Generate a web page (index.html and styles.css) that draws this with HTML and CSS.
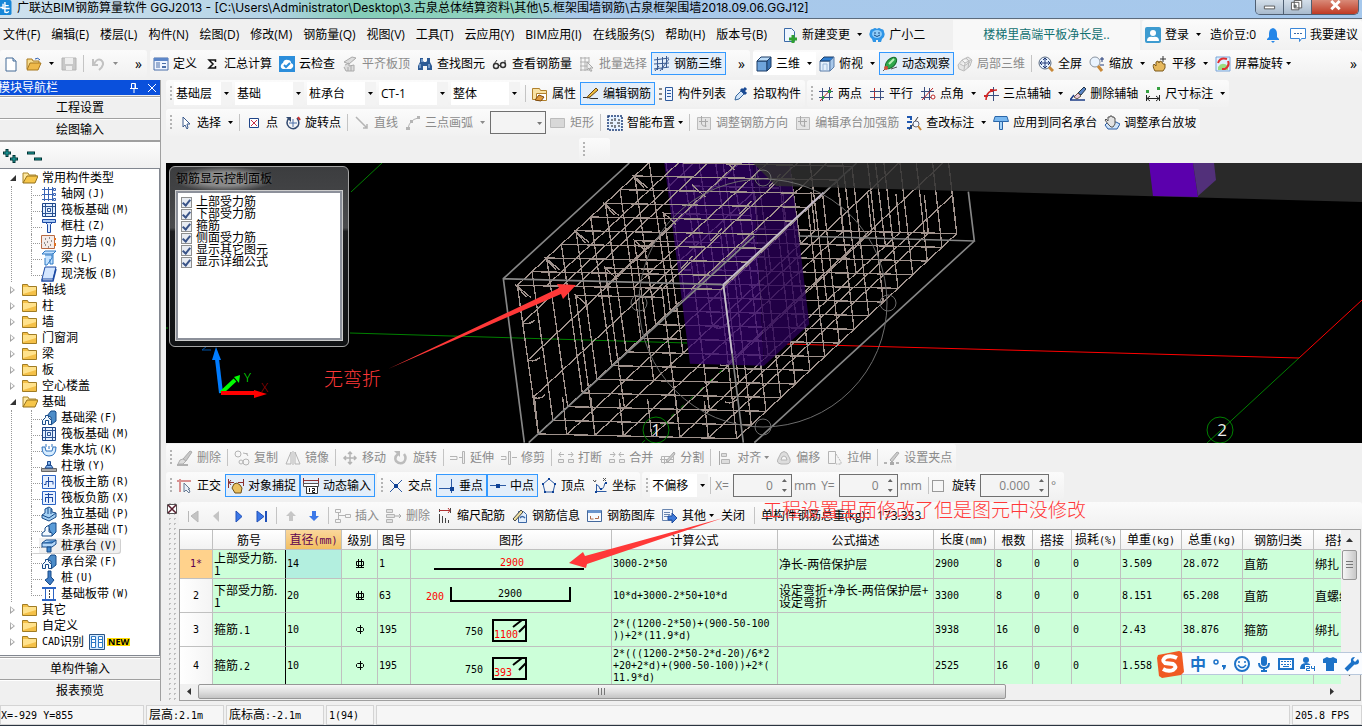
FILE: index.html
```html
<!DOCTYPE html>
<html lang="zh-CN">
<head>
  <meta charset="UTF-8">
  <meta name="viewport" content="width=device-width, initial-scale=1.0">
  <title>广联达BIM钢筋算量软件 GGJ2013</title>
  <link rel="stylesheet" href="styles.css">
</head>
<body>

  <!-- icon sprite -->
  <svg class="sprite" aria-hidden="true">
    <symbol id="i-new" viewBox="0 0 16 16"><path d="M3 2h7l3 3v10H3z" fill="#fff" stroke="#456a96"/><path d="M10 2v3h3" fill="#cfe0f2" stroke="#456a96"/></symbol>
    <symbol id="i-open" viewBox="0 0 16 16"><path d="M1 13V3h5l1 2h6v3" fill="#f6dc8d" stroke="#a8781f"/><path d="M1 14l3-7h11l-3 7z" fill="#eeb94a" stroke="#a8781f"/><path d="M9 3q3-2 5 1" fill="none" stroke="#2a5cae"/></symbol>
    <symbol id="i-save" viewBox="0 0 16 16"><path d="M1 2h14v12H1z" fill="#c8c8c8" stroke="#b4b4b4"/><path d="M4 2h8v6H4zM5 10h6v4H5z" fill="#eee"/></symbol>
    <symbol id="i-undo" viewBox="0 0 16 16"><path d="M3 3v6h5M4 8q3-6 7-4 5 4-2 10" fill="none" stroke="#c2c2c2" stroke-width="2"/></symbol>
    <symbol id="i-def" viewBox="0 0 16 16"><path d="M1 2h14v12H1z" fill="#eef4ff" stroke="#4a6ea8"/><path d="M1 2h14v3H1z" fill="#5c86c8"/><path d="M3 7h4M3 9h4M3 11h4" stroke="#4a6ea8"/><path d="M9 7h4v1H9zM9 10h4v2H9z" fill="#4a6ea8"/></symbol>
    <symbol id="i-sum" viewBox="0 0 16 16"><path d="M11.500 6V4H5l4 4-4 4h6.500v-2" fill="none" stroke="#111" stroke-width="1.500"/></symbol>
    <symbol id="i-cloud" viewBox="0 0 16 16"><path d="M0 0h16v16H0z" fill="#2c8edb"/><path d="M4 13q-3-1-2-4 1-2 2-2 1-4 5-3 3 0 3 3 3 1 2 4l-2 2z" fill="#fff"/><path d="M5 9l2 2 4-4" fill="none" stroke="#2c8edb" stroke-width="2"/></symbol>
    <symbol id="i-slab" viewBox="0 0 16 16"><path d="M2 6l8-5 4 1-7 6zM3 9l4-2v3l5-1v6H4l-2-4M6 11v4M9 10v5" fill="#ddd" stroke="#aaa"/></symbol>
    <symbol id="i-find" viewBox="0 0 16 16"><path d="M3 2h3v3l1 1h2l1-1V2h3v4l2 4v4h-5v-4H6v4H1v-4l2-4z" fill="#2c5a94"/><path d="M3 8v4M12 8v4M5 3v3" stroke="#b8d4f4"/></symbol>
    <symbol id="i-glasses" viewBox="0 0 16 16"><circle cx="4" cy="10" r="2.500" fill="none" stroke="#333" stroke-width="1.500"/><circle cx="11" cy="9" r="2.500" fill="none" stroke="#333" stroke-width="1.500"/><path d="M6 10l3-1M2 8l3-4M13 8V4" stroke="#333"/></symbol>
    <symbol id="i-batch" viewBox="0 0 16 16"><path d="M1 2h9M1 6h9M1 10h9M1 14h9M2 1v14M6 1v14M10 1v6" stroke="#b0b0b0"/><path d="M8 6l6 6-3 0 2 3-2 0-1-3-2 2z" fill="#eee" stroke="#a8a8a8"/></symbol>
    <symbol id="i-mesh" viewBox="0 0 16 16"><path d="M3.500 1v13M8.500 1v13M12.500 0v12M0 4l15-2M0 8l15-1M0 13l15-2M1 15l4-5M6 15l9-12" fill="none" stroke="#3a5a90"/></symbol>
    <symbol id="i-cube" viewBox="0 0 16 16"><path d="M1 5h10v10H1z" fill="#6fa4dc" stroke="#1d3c66"/><path d="M1 5l4-4h10l-4 4z" fill="#bcdcf8" stroke="#1d3c66"/><path d="M11 5l4-4v10l-4 4z" fill="#3c74b4" stroke="#1d3c66"/></symbol>
    <symbol id="i-top" viewBox="0 0 16 16"><path d="M1 5h10v10H1z" fill="#e4f0fc" stroke="#5a7ca8"/><path d="M1 5l4-4h10l-4 4z" fill="#2f7ed0" stroke="#1d3c66"/><path d="M11 5l4-4v10l-4 4z" fill="#a8c8ea" stroke="#5a7ca8"/><path d="M4 15V8h4v7" fill="none" stroke="#9cb8d8"/></symbol>
    <symbol id="i-orbit" viewBox="0 0 16 16"><ellipse cx="9" cy="7" rx="7" ry="4" transform="rotate(-45 9 7)" fill="#2ea84a" stroke="#176a2c"/><path d="M7 8l5-5" stroke="#b8f0b8" stroke-width="2"/><path d="M1 15l5-5M9 13l6-2" stroke="#555"/><circle cx="4" cy="12" r="2" fill="#d05038"/></symbol>
    <symbol id="i-part" viewBox="0 0 16 16"><path d="M1 9l4-5 6-3 4 3-2 6-6 5-5-2zM5 4l3 3 6-3M8 7l-1 7M3 8l4 2 6-4M9 2l3 3-1 7" fill="#e6e6e6" stroke="#bbb"/></symbol>
    <symbol id="i-full" viewBox="0 0 16 16"><circle cx="7" cy="7" r="6" fill="#e8f2ff" stroke="#5a6a80"/><path d="M7 2v10M2 7h10M5 4l2-2 2 2M5 10l2 2 2-2M4 5L2 7l2 2M10 5l2 2-2 2" fill="none" stroke="#223a78"/><path d="M11 11l4 4" stroke="#c88838" stroke-width="3"/></symbol>
    <symbol id="i-zoom" viewBox="0 0 16 16"><circle cx="6" cy="6" r="5" fill="#eaf4ff" stroke="#8a94a0"/><path d="M9 10l4 5" stroke="#c88838" stroke-width="3"/><path d="M13 1v5M11 3h4M11 9h4" stroke="#223a78"/></symbol>
    <symbol id="i-pan" viewBox="0 0 16 16"><path d="M3 15q-3-5-1-7l2 2V6l2-1 1 2 1-2 2 1 1 2 2 0v4l-2 3z" fill="#e6b85c" stroke="#7c5a1c"/><path d="M11 0v6M8 3h6" stroke="#333"/></symbol>
    <symbol id="i-rot3" viewBox="0 0 16 16"><path d="M1 1h14v14H1z" fill="#dff0ff" stroke="#7aa6d8"/><path d="M3 11q4-6 10-1v4H3z" fill="#9adc80"/><path d="M3 7q2-6 9-4M13 5q2 5-3 8l-3 0" fill="none" stroke="#e03030" stroke-width="2"/></symbol>
    <symbol id="i-change" viewBox="0 0 16 16"><path d="M2.500 1.500h7l3 3v10h-10z" fill="#eef6ff" stroke="#3a6aa8"/><path d="M11 8v8M7 12h8" stroke="#2fa030" stroke-width="3"/></symbol>
    <symbol id="i-face" viewBox="0 0 16 16"><path d="M8 2q2-2 4 0 3 0 3 3 2 4-2 7l-1 3H9v-2H7v2H4l-1-3Q-1 9 1 5q0-3 3-3 2-2 4 0z" fill="#2f95e6"/><ellipse cx="8" cy="7" rx="5" ry="4" fill="#8fccf8"/><path d="M6 5v2M10 5v2M5 8q3 3 6 0" fill="none" stroke="#144a86"/></symbol>
    <symbol id="i-user" viewBox="0 0 16 16"><rect width="16" height="16" rx="2" fill="#3d9bd0"/><circle cx="8" cy="6" r="3" fill="#fff"/><path d="M2 14q0-5 6-4 6-1 6 4z" fill="#fff"/></symbol>
    <symbol id="i-bell" viewBox="0 0 16 16"><path d="M8 1q4 1 4 6v3l2 2v1H2v-1l2-2V7q0-5 4-6zM6 14h4l-2 2z" fill="#2486e8"/></symbol>
    <symbol id="i-chat" viewBox="0 0 16 16"><path d="M.5 1.500h15v10h-4l-2 3v-3h-9z" fill="#fff" stroke="#3a86d8"/><path d="M4 6.500h8" stroke="#3a6aa8" stroke-dasharray="2 1"/></symbol>
    <symbol id="i-prop" viewBox="0 0 16 16"><path d="M.5 2.500h7l1 2h6v9H.5z" fill="#f8e2a4" stroke="#b0802c"/><path d="M4.500 7.500h10v7h-10z" fill="#fff" stroke="#b0802c"/><path d="M3 14l4-5 5 2-3 4z" fill="#e09a3c" stroke="#7c4a10"/></symbol>
    <symbol id="i-edit" viewBox="0 0 16 16"><path d="M0 11.500h5l3 1h7" fill="none" stroke="#333"/><path d="M5 10L13 2l2 2-8 7-3 1z" fill="#f0c040" stroke="#6a4414"/></symbol>
    <symbol id="i-list" viewBox="0 0 16 16"><path d="M1 2h3v2H1zM1 7h3v2H1zM1 12h3v2H1z" fill="#888"/><path d="M7.500 1.500h7v13h-7z" fill="#eef4ff" stroke="#2e5a9c"/><path d="M9 4.500h4M9 7.500h4M9 10.500h4" stroke="#2e5a9c"/></symbol>
    <symbol id="i-pick" viewBox="0 0 16 16"><path d="M2 14l1-4 5-5 3 3-5 5z" fill="#d4e6fa" stroke="#35669c"/><path d="M8 3l5 5M10 5l3-3" stroke="#1a4a94" stroke-width="3"/></symbol>
    <symbol id="i-two" viewBox="0 0 16 16"><path d="M4.500 2v13M11.500 1v13M1 5.500h14M1 11.500h14" stroke="#3a4e80"/><path d="M2 15L14 2" stroke="#c02828"/><path d="M4 10h2v3H4zM10 4h3v3h-3z" fill="#2c9a40"/></symbol>
    <symbol id="i-para" viewBox="0 0 16 16"><path d="M5.500 2v12" stroke="#c02828"/><path d="M11.500 2v12M1 5.500h14M1 11.500h14" stroke="#3a4e80"/></symbol>
    <symbol id="i-angle" viewBox="0 0 16 16"><path d="M4.500 1v13M1 5.500h13M9.500 2v12M1 11.500h14" stroke="#3a4e80"/><path d="M2 14L13 2" stroke="#c02828"/><circle cx="13" cy="11" r="2" fill="#fff" stroke="#c02828"/></symbol>
    <symbol id="i-three" viewBox="0 0 16 16"><path d="M10.500 1v14M4 9.500h12" stroke="#3a4e80"/><path d="M3 14Q3 4 14 4" fill="none" stroke="#d02828" stroke-width="1.500"/><path d="M1 9h4v2H1zM7 3h3v3H7z" fill="#d02828"/></symbol>
    <symbol id="i-delax" viewBox="0 0 16 16"><path d="M8 7l6-6 2 2-5 6z" fill="#5a86c8" stroke="#234"/><path d="M4 11l4-4 3 3-4 3z" fill="#e8c8d8" stroke="#654"/><path d="M0 14h15M0 14l4-5" stroke="#1d3c86" stroke-width="1.500"/></symbol>
    <symbol id="i-dim" viewBox="0 0 16 16"><path d="M1.500 9v6M14.500 9v6M2 12.500h12M5 10l-3 2.500L5 15M11 10l3 2.500-3 2.500" fill="none" stroke="#222"/><path d="M1 4h3v3H1zM12 1h3v3h-3z" fill="#35a040"/></symbol>
    <symbol id="i-cursor" viewBox="0 0 16 16"><path d="M6 2v10l2-2 2 4 1-1-1-4h3z" fill="#fff" stroke="#3a5a8c"/></symbol>
    <symbol id="i-point" viewBox="0 0 16 16"><path d="M3.500 3.500h9v9h-9z" fill="#fff" stroke="#1f4488"/><path d="M5 5l6 6M11 5l-6 6" stroke="#c83048"/></symbol>
    <symbol id="i-rotpt" viewBox="0 0 16 16"><path d="M4 3q-4 5 0 9 5 4 9-1 2-4-1-8" fill="none" stroke="#334a70" stroke-width="1.500"/><path d="M1 2h5v5z" fill="#334a70"/><path d="M8 4v8M4 8h8" stroke="#4a6ea8"/><path d="M13 2l2 3" stroke="#c83030" stroke-width="2"/></symbol>
    <symbol id="i-line" viewBox="0 0 16 16"><path d="M2 2l11 11M13 9v4H9" fill="none" stroke="#b4b4b4" stroke-width="1.500"/></symbol>
    <symbol id="i-arc" viewBox="0 0 16 16"><path d="M3 14Q4 5 13 3" fill="none" stroke="#b4b4b4"/><path d="M1 12h4v3H1zM5 5h3v3H5zM12 1h3v3h-3z" fill="#b4b4b4"/></symbol>
    <symbol id="i-rect" viewBox="0 0 16 16"><path d="M.5 3.500h14v9H.5z" fill="#d8d8d8" stroke="#bcbcbc"/></symbol>
    <symbol id="i-smart" viewBox="0 0 16 16"><path d="M1 1h14v14H1z" fill="#e6f2ff" stroke="#1c3c78" stroke-width="1.500" stroke-dasharray="2 1"/><path d="M8 3v3M8 10v3M3 8h3M10 8h3M4 5h2M11 5h2M4 11h2M11 11h2" stroke="#111"/></symbol>
    <symbol id="i-dir" viewBox="0 0 16 16"><path d="M1.500 2.500h13v12h-13z" fill="#e4e4e4" stroke="#bbb"/><path d="M5.500 1v8q1 3 5 2M9.500 4v8M3 6.500h9" fill="none" stroke="#a8a8a8"/></symbol>
    <symbol id="i-check" viewBox="0 0 16 16"><path d="M1 2h4v3M1 7h5M1 13h4v-3" fill="none" stroke="#1f58b0" stroke-width="2"/><path d="M3 15L12 2" stroke="#3a3a3a"/><circle cx="10" cy="9" r="3" fill="#f2f8ff" stroke="#667"/><path d="M12 11l3 4" stroke="#c88838" stroke-width="2"/></symbol>
    <symbol id="i-cap" viewBox="0 0 16 16"><path d="M2 1.500h12l1.500 5H.5z" fill="#79b8f0" stroke="#2a66a8"/><path d="M6.500 6.500h3v8h-3z" fill="#a8d4f8" stroke="#2a66a8"/></symbol>
    <symbol id="i-slope" viewBox="0 0 16 16"><path d="M1 10l3 4h9l3-5-4-2H4z" fill="#cfe4fa" stroke="#2a5ca4"/><path d="M4 9L1 5l1-1 2 2V2h2V1h2v1h2v1h1v6l-2 3H7z" fill="#e2e2e2" stroke="#555"/></symbol>
    <symbol id="i-brush" viewBox="0 0 16 16"><path d="M6 9l7-8 2 1-6 9z" fill="#c8c8c8" stroke="#aaa"/><path d="M3 10l3-1 3 2-3 3H1z" fill="#ddd" stroke="#b0b0b0"/><path d="M0 15h11" stroke="#b0b0b0" stroke-width="2"/></symbol>
    <symbol id="i-copy" viewBox="0 0 16 16"><circle cx="4" cy="4" r="3" fill="none" stroke="#b4b4b4"/><circle cx="7" cy="12" r="2" fill="none" stroke="#b4b4b4"/><circle cx="12" cy="12" r="3" fill="none" stroke="#b4b4b4"/><path d="M9 3l5 1M12 3l2 3" stroke="#b4b4b4"/></symbol>
    <symbol id="i-mirror" viewBox="0 0 16 16"><path d="M6 2v12H1zM10 2v12h5z" fill="none" stroke="#b4b4b4"/><path d="M8 1v14" stroke="#b4b4b4"/></symbol>
    <symbol id="i-move" viewBox="0 0 16 16"><path d="M8 2v12M2 8h12M6 4l2-2 2 2M6 12l2 2 2-2M4 6L2 8l2 2M12 6l2 2-2 2" fill="none" stroke="#b4b4b4" stroke-width="1.500"/></symbol>
    <symbol id="i-rotate" viewBox="0 0 16 16"><path d="M5 4q-4 3-2 7 4 4 8 1 3-4 0-8" fill="none" stroke="#bcbcbc" stroke-width="2.500"/><path d="M1 1h6v6z" fill="#bcbcbc"/></symbol>
    <symbol id="i-extend" viewBox="0 0 16 16"><path d="M0 6.500h7v3H0M9 7.500h3" fill="none" stroke="#b4b4b4"/><path d="M12.500 1.500h2v12h-2z" fill="#eee" stroke="#b4b4b4"/></symbol>
    <symbol id="i-trim" viewBox="0 0 16 16"><path d="M0 6.500h5v3H0M11 7.500h5" fill="none" stroke="#b4b4b4"/><path d="M7.500 1.500h2v13h-2z" fill="#eee" stroke="#b4b4b4"/></symbol>
    <symbol id="i-break" viewBox="0 0 16 16"><path d="M1 4.500h5M10 4.500h5M3 2L1 4.500 3 7M13 2l2 2.500L13 7" fill="none" stroke="#b4b4b4"/><path d="M.5 9.500h5v3h-5zM10.500 9.500h5v3h-5z" fill="#eee" stroke="#b4b4b4"/></symbol>
    <symbol id="i-merge" viewBox="0 0 16 16"><path d="M1 4.500h5M10 4.500h5M4 2l2 2.500L4 7M12 2l-2 2.500L12 7" fill="none" stroke="#b4b4b4"/><path d="M.5 9.500h5v3h-5zM10.500 9.500h5v3h-5z" fill="#eee" stroke="#b4b4b4"/></symbol>
    <symbol id="i-split" viewBox="0 0 16 16"><path d="M1.500 6.500h12v6h-12zM0 9.500h14M4.500 6v8" fill="none" stroke="#b4b4b4"/><path d="M6 11l8-9 1 2-7 8z" fill="#ccc" stroke="#aaa"/></symbol>
    <symbol id="i-align" viewBox="0 0 16 16"><path d="M2.500 1v14" stroke="#a8a8a8"/><path d="M4.500 3.500h5v3h-5zM4.500 9.500h8v4h-8z" fill="#ddd" stroke="#b4b4b4"/></symbol>
    <symbol id="i-offset" viewBox="0 0 16 16"><path d="M5 3q3-3 6 0l3 6q1 5-4 5H5q-5-1-3-5z" fill="#ddd" stroke="#b4b4b4"/><path d="M6 7q2-2 4 0l1 3H5z" fill="#f6f6f6" stroke="#b4b4b4"/></symbol>
    <symbol id="i-stretch" viewBox="0 0 16 16"><path d="M1.500 1.500h7v12h-7z" fill="none" stroke="#b4b4b4"/><path d="M9 4l5 8v2H9" fill="none" stroke="#b4b4b4" stroke-dasharray="2 1"/></symbol>
    <symbol id="i-grip" viewBox="0 0 16 16"><path d="M0 13h3M12 13h3" stroke="#b4b4b4" stroke-width="2"/><path d="M6 10l7-8 2 1-7 9z" fill="#ccc" stroke="#aaa"/><path d="M6 12h4v3H6z" fill="#aaa"/></symbol>
    <symbol id="i-ortho" viewBox="0 0 16 16"><path d="M0 3h14M3 1v13" stroke="#d89090" stroke-width="2"/><path d="M7 5v9l2-2 3 3 1-2-2-2h2z" fill="#e8eef6" stroke="#667a94"/></symbol>
    <symbol id="i-snap" viewBox="0 0 16 16"><path d="M.5 1v9M15.500 1v7M1 4.500h5M10 4.500h5M3 2L1 4.500 3 7" fill="none" stroke="#8c3030"/><path d="M4 10l2-4 3-1 3 2 2 3-1 5H7z" fill="#eac060" stroke="#6e5018"/></symbol>
    <symbol id="i-dyn" viewBox="0 0 16 16"><path d="M.5 0v6M15.500 0v6M1 2.500h14" stroke="#8c3030"/><path d="M.5 5.500h15v3H.5z" fill="#fff" stroke="#555"/><path d="M3.500 8.500h11v7h-11z" fill="#fff" stroke="#333"/><path d="M6.500 10v4M9 10.500h2.500v2h-2v2H12" fill="none" stroke="#111"/></symbol>
    <symbol id="i-cross" viewBox="0 0 16 16"><path d="M2 2l12 12M14 2L2 14" stroke="#2c5aa4"/><path d="M6 6h4v4H6z" fill="#0f4296"/></symbol>
    <symbol id="i-perp" viewBox="0 0 16 16"><path d="M12.500 1v14M0 10.500h15" stroke="#2c5aa4"/><path d="M11 9h4v4h-4z" fill="#0f4296"/></symbol>
    <symbol id="i-mid" viewBox="0 0 16 16"><path d="M0 7.500h16" stroke="#2c5aa4"/><path d="M6 6h4v4H6z" fill="#0f4296"/></symbol>
    <symbol id="i-vertex" viewBox="0 0 16 16"><path d="M8 1l6 5-2 8H4L2 6z" fill="none" stroke="#2c5aa4"/><path d="M7 0h2v2H7zM13 5h2v2h-2zM1 5h2v2H1zM3 13h2v2H3zM11 13h2v2h-2z" fill="#0f4296"/></symbol>
    <symbol id="i-coord" viewBox="0 0 16 16"><path d="M4.500 6v7.500h10M5 7q2 0 3 4 3 2 5-6" fill="none" stroke="#2c5aa4"/><path d="M3 13h2v2H3zM8 10h2v2H8zM13 4h2v2h-2z" fill="#0f4296"/><path d="M1 2l2 2 1-2M11 0l3 3M14 0l-3 3" fill="none" stroke="#555"/></symbol>
    <symbol id="i-first" viewBox="0 0 16 16"><path d="M3.500 3v11M13 3v11L6 8z" fill="#c4c4c4" stroke="#b8b8b8"/></symbol>
    <symbol id="i-prev" viewBox="0 0 16 16"><path d="M11 3v11L5 8z" fill="#c4c4c4"/></symbol>
    <symbol id="i-next" viewBox="0 0 16 16"><path d="M5 3v11l6-5.500z" fill="#3c78e8" stroke="#2050b8"/></symbol>
    <symbol id="i-last" viewBox="0 0 16 16"><path d="M3 3v11l7-5.500z" fill="#3c78e8" stroke="#2050b8"/><path d="M12 3v11" stroke="#2050b8" stroke-width="2"/></symbol>
    <symbol id="i-up" viewBox="0 0 16 16"><path d="M8 3l5 5h-3v5H6V8H3z" fill="#c6c6c6"/></symbol>
    <symbol id="i-down" viewBox="0 0 16 16"><path d="M8 13l5-5h-3V3H6v5H3z" fill="#3c78e8"/></symbol>
    <symbol id="i-insert" viewBox="0 0 16 16"><path d="M.5 1.500h5v3h-5zM.5 11.500h5v3h-5zM10.500 6.500h5v3h-5zM3.500 4v7M4 7.500h6" fill="none" stroke="#b4b4b4"/></symbol>
    <symbol id="i-remove" viewBox="0 0 16 16"><path d="M.5 1.500h6v3h-6zM.5 6.500h8v3h-8zM.5 11.500h6v3h-6z" fill="#e2e2e2" stroke="#b4b4b4"/><path d="M9 8h6M13 6l2 2-2 2" fill="none" stroke="#a8a8a8"/></symbol>
    <symbol id="i-scale" viewBox="0 0 16 16"><path d="M2.500 1v3M2.500 6v9M5.500 8v7M8.500 10v5M11.500 12v3M13.500 0v5" stroke="#444"/><path d="M2 2.500h11M11 0l2 2.500L11 5" fill="none" stroke="#b03030"/></symbol>
    <symbol id="i-info" viewBox="0 0 16 16"><path d="M6.500 3.500h5l3 3v8h-8z" fill="#e2eefc" stroke="#3a66a4"/><path d="M1 11L9 2l2 2-8 9z" fill="#f0e0a0" stroke="#444"/><path d="M8 10q2-3 5 0" fill="none" stroke="#3a66a4" stroke-width="1.500"/></symbol>
    <symbol id="i-lib" viewBox="0 0 16 16"><path d="M.5 2.500h14v11H.5z" fill="#f6faff" stroke="#44689c"/><path d="M1 2h13v3H1z" fill="#6a94cc"/><path d="M3.500 8v3h3M8 10.500h3.500V8" fill="none" stroke="#b06a4a"/></symbol>
    <symbol id="i-other" viewBox="0 0 16 16"><path d="M.5 1.500h10v11H.5z" fill="#f2f6fc" stroke="#6a86b0"/><path d="M2 4.500h6M2 6.500h6M2 8.500h4" stroke="#6a86b0"/><path d="M6 8h4V5l5 5-5 5v-3H6z" fill="#3c78d8" stroke="#1d4a9c"/></symbol>

    <symbol id="t-open" viewBox="0 0 16 16"><path d="M1 13V3h5l1 2h7v3" fill="#ffe9a0" stroke="#a88428"/><path d="M1 13l4-7h11l-3 7z" fill="#f6c64a" stroke="#94701c"/></symbol>
    <symbol id="t-folder" viewBox="0 0 16 16"><path d="M.5 13.500v-11h5l1 2h8v9z" fill="#f4c048" stroke="#a07c24"/><path d="M1 5h13v3L1 12z" fill="#ffe28c"/></symbol>
    <symbol id="t-grid" viewBox="0 0 16 16"><path d="M3.500 1v14M7.500 1v14M11.500 1v14M1 3.500h12M1 8.500h12M1 13.500h12" stroke="#3a64b4"/><path d="M12.500 2.500h2v2h-2zM12.500 7.500h2v2h-2zM12.500 12.500h2v2h-2z" fill="#fff" stroke="#3a64b4"/></symbol>
    <symbol id="t-raft" viewBox="0 0 16 16"><path d="M1.500 1.500h13v13h-13z" fill="#e4f0ff" stroke="#1c4486"/><path d="M4.500 2v12M11.500 2v12M2 4.500h12M2 11.500h12M6.500 6.500h3v3h-3z" fill="none" stroke="#2c5494"/></symbol>
    <symbol id="t-col" viewBox="0 0 16 16"><path d="M1.500 1.500h13v3h-13z" fill="#a8c8f4" stroke="#1c4aa4"/><path d="M4.500 4.500h7l-2 2v8h-3v-8z" fill="#dceaff" stroke="#1c4aa4"/></symbol>
    <symbol id="t-wall" viewBox="0 0 16 16"><path d="M.5 1.500h13v13H.5z" fill="#f4ecea" stroke="#b86a44"/><path d="M4 5h1M8 4h1M6 8h1M10 7h1M4 11h1M9 11h1M7 13h1M3 9h1" stroke="#333"/><path d="M14 4v2M14 9v3" stroke="#e07020" stroke-width="2"/></symbol>
    <symbol id="t-beam" viewBox="0 0 16 16"><path d="M1 4l3-3h11l-3 3zM4 5h7v3L6 15H4V8M12 3v11h-3V9" fill="#c4e2ff" stroke="#2c78c4"/></symbol>
    <symbol id="t-slab" viewBox="0 0 16 16"><path d="M4 1h11l-3 12H1z" fill="#d4e6ff" stroke="#1c4aa4"/><path d="M1 13v2h11l3-12" fill="none" stroke="#1c4aa4" stroke-width="1.500"/></symbol>
    <symbol id="t-fbeam" viewBox="0 0 16 16"><path d="M6 6l4-5h4l1 1v9l-5 4V7z" fill="#4c8cc8" stroke="#164a88"/><path d="M1.500 14.500v-4l3-3v-2h3v2l3 3v4h-3v-4h-3v4z" fill="#f0f8ff" stroke="#164a88"/></symbol>
    <symbol id="t-pit" viewBox="0 0 16 16"><path d="M1 5h3l1 4h6l1-4h3q0 9-7 9T1 5z" fill="#d6ecff" stroke="#2c70bc"/><path d="M5 2v3M8 4v3M11 2v3" stroke="#2c70bc"/></symbol>
    <symbol id="t-pier" viewBox="0 0 16 16"><path d="M.5 10.500h15v3H.5z" fill="#a8a8a8" stroke="#666"/><path d="M4 10l2-3h4l2 3zM6.500 3.500h3v4h-3z" fill="#8cbcf0" stroke="#1c4a90"/></symbol>
    <symbol id="t-main" viewBox="0 0 16 16"><path d="M1.500 1.500h13v13h-13z" fill="#e6f0ff" stroke="#2c64c4"/><path d="M7.500 3v10M5 7.500h7v3M3 10.500h2v-3" fill="none" stroke="#1c4aa4"/></symbol>
    <symbol id="t-neg" viewBox="0 0 16 16"><path d="M1.500 1.500h13v13h-13z" fill="#e6f0ff" stroke="#2c64c4"/><path d="M7.500 3v10M4 4.500h8M4 7.500h8M4.500 8v4M11.500 8v4" fill="none" stroke="#1c4aa4"/></symbol>
    <symbol id="t-iso" viewBox="0 0 16 16"><path d="M1 9l3-2V3l4-2 3 2v3l4 1v4l-7 4-7-3z" fill="#a4d0f4" stroke="#164a88"/><path d="M1 9l7 3 7-5M7 2v6M10 3v5" fill="none" stroke="#164a88"/></symbol>
    <symbol id="t-strip" viewBox="0 0 16 16"><path d="M7 4l4-3h4v9l-4 4z" fill="#5a9cd8" stroke="#164a88"/><path d="M1 14v-3l3-2V6l2-2h2v6l3 1v3z" fill="#f0f8ff" stroke="#164a88"/></symbol>
    <symbol id="t-cap" viewBox="0 0 16 16"><path d="M1 5l4-3h10v4l-4 3H1z" fill="#b4d8fa" stroke="#164a88"/><path d="M1 5h10l4-3M6 9h4v5H6z" fill="#3f86cc" stroke="#164a88"/></symbol>
    <symbol id="t-pile" viewBox="0 0 16 16"><path d="M7 1h3v6l3 3-4 5-5-5 3-2z" fill="#3f7cc4" stroke="#164a88"/></symbol>
    <symbol id="t-band" viewBox="0 0 16 16"><path d="M1 2h14M1 14h14" stroke="#2c64c4" stroke-width="2"/><path d="M4.500 3v10M12.500 3v10" stroke="#2c64c4"/><path d="M8.500 4v8" stroke="#444" stroke-dasharray="2 1"/></symbol>
    <symbol id="t-cad" viewBox="0 0 16 16"><path d="M.5 .5h15v15H.5z" fill="#d4eaff" stroke="#2c5484"/><path d="M2.500 2.500h4v11h-4zM9.500 2.500h4v11h-4zM3 5.500h4M3 8.500h4M9 5.500h4M9 8.500h4" fill="#fff" stroke="#2c78c4"/></symbol>
    <symbol id="g-three" viewBox="0 0 12 12"><path d="M2.500 3.500h7v4h-7zM4.500 1v8M7.500 1v8M2 9.500h8" fill="none" stroke="#000"/></symbol>
    <symbol id="g-one" viewBox="0 0 12 12"><path d="M3.500 3.500h5l1 1v2l-1 1h-5l-1-1v-2zM6.500 1v9" fill="none" stroke="#000"/></symbol>
  </svg>

  <header class="titlebar">
    <svg class="logo" viewBox="0 0 16 16" aria-hidden="true"><rect width="16" height="16" rx="2" fill="#1787d8"/><path d="M4 8h3V4M9 2v11q3 1 4-1M9 6h4M6 9h8" fill="none" stroke="#fff" stroke-width="1.500"/></svg>
    <h1>广联达BIM钢筋算量软件 GGJ2013 - [C:\Users\Administrator\Desktop\3.古泉总体结算资料\其他\5.框架围墙钢筋\古泉框架围墙2018.09.06.GGJ12]</h1>
    <div class="win-buttons">
      <button aria-label="最小化"><svg viewBox="0 0 28 15"><path d="M8.500 6.500h11v3h-11z" fill="#fff" stroke="#555"/></svg></button>
      <button aria-label="还原"><svg viewBox="0 0 28 15"><path d="M10.500 .5h8v8h-8zM7.500 2.500h8v8h-8z" fill="#fff" stroke="#555"/><path d="M10.500 5.500h2v2h-2z" fill="#8aa" stroke="#555"/></svg></button>
      <button class="close" aria-label="关闭窗口"><svg viewBox="0 0 46 15"><path d="M19 1l9 9M28 1l-9 9" stroke="#fff" stroke-width="3"/></svg></button>
    </div>
  </header>

  <nav class="menubar">
    <div class="menus">
      <button>文件(F)</button><button>编辑(E)</button><button>楼层(L)</button><button>构件(N)</button><button>绘图(D)</button><button>修改(M)</button><button>钢筋量(Q)</button><button>视图(V)</button><button>工具(T)</button><button>云应用(Y)</button><button>BIM应用(I)</button><button>在线服务(S)</button><button>帮助(H)</button><button>版本号(B)</button>
    </div>
    <button class="tool drop"><svg class="ic"><use href="#i-change"/></svg>新建变更</button>
    <button class="tool"><svg class="ic"><use href="#i-face"/></svg>广小二</button>
    <div class="account">
      <a class="notice" href="#">楼梯里高端平板净长是..</a>
      <div class="group user">
        <button class="tool drop"><svg class="ic"><use href="#i-user"/></svg>登录</button>
        <button class="tool">造价豆:0</button>
        <button class="tool" aria-label="消息"><svg class="ic"><use href="#i-bell"/></svg></button>
        <button class="tool"><svg class="ic"><use href="#i-chat"/></svg>我要建议</button>
      </div>
    </div>
  </nav>

  <div class="bar top">
    <div class="group file">
      <button class="tool" aria-label="新建"><svg class="ic"><use href="#i-new"/></svg></button>
      <button class="tool drop" aria-label="打开"><svg class="ic"><use href="#i-open"/></svg></button>
      <button class="tool" aria-label="保存" disabled><svg class="ic"><use href="#i-save"/></svg></button>
      <span class="sep"></span>
      <button class="tool drop" aria-label="撤销" disabled><svg class="ic"><use href="#i-undo"/></svg></button>
      <button class="more" aria-label="更多文件工具">»</button>
    </div>
    <div class="group calc">
      <button class="tool"><svg class="ic"><use href="#i-def"/></svg>定义</button>
      <button class="tool"><svg class="ic"><use href="#i-sum"/></svg>汇总计算</button>
      <button class="tool"><svg class="ic"><use href="#i-cloud"/></svg>云检查</button>
      <button class="tool" disabled><svg class="ic"><use href="#i-slab"/></svg>平齐板顶</button>
      <button class="tool"><svg class="ic"><use href="#i-find"/></svg>查找图元</button>
      <button class="tool"><svg class="ic"><use href="#i-glasses"/></svg>查看钢筋量</button>
      <button class="tool" disabled><svg class="ic"><use href="#i-batch"/></svg>批量选择</button>
      <button class="tool on"><svg class="ic"><use href="#i-mesh"/></svg>钢筋三维</button>
      <button class="more" aria-label="更多计算工具">»</button>
    </div>
    <div class="group view">
      <button class="tool drop white"><svg class="ic"><use href="#i-cube"/></svg>三维</button>
      <button class="tool drop"><svg class="ic"><use href="#i-top"/></svg>俯视</button>
      <button class="tool on"><svg class="ic"><use href="#i-orbit"/></svg>动态观察</button>
      <button class="tool" disabled><svg class="ic"><use href="#i-part"/></svg>局部三维</button>
      <span class="sep"></span>
      <button class="tool"><svg class="ic"><use href="#i-full"/></svg>全屏</button>
      <button class="tool drop"><svg class="ic"><use href="#i-zoom"/></svg>缩放</button>
      <button class="tool drop"><svg class="ic"><use href="#i-pan"/></svg>平移</button>
      <button class="tool drop tight"><svg class="ic"><use href="#i-rot3"/></svg>屏幕旋转</button>
      <button class="more" aria-label="更多视图工具">»</button>
    </div>
  </div>

  <div class="app">
    <aside class="sidebar">
      <div class="side-title">
        <h2>模块导航栏</h2>
        <button aria-label="固定"><svg viewBox="0 0 12 12"><path d="M3.500 1.500h4v5h-4zM2 6.500h8M6 7v4M7 2v5" fill="none" stroke="#fff"/></svg></button>
        <button aria-label="关闭导航栏"><svg viewBox="0 0 12 12"><path d="M2 2l8 8M10 2l-8 8" stroke="#fff"/></svg></button>
      </div>
      <button class="section">工程设置</button>
      <button class="section">绘图输入</button>
      <div class="expand">
        <button aria-label="全部展开"><svg viewBox="0 0 18 16"><path d="M5 1v8M1 5h8M12 7v8M8 11h8" stroke="#033" stroke-width="3"/><path d="M5 2v6M2 5h6M12 8v6M9 11h6" stroke="#2aa"/></svg></button>
        <button aria-label="全部折叠"><svg viewBox="0 0 18 16"><path d="M2 5h8M9 11h8" stroke="#033" stroke-width="3"/><path d="M3 5h6M10 11h6" stroke="#2aa"/></svg></button>
      </div>
      <ul class="tree">
        <li class="open"><a href="#"><svg class="ic"><use href="#t-open"/></svg>常用构件类型</a>
          <ul>
            <li><a href="#"><svg class="ic"><use href="#t-grid"/></svg>轴网<kbd>(J)</kbd></a></li>
            <li><a href="#"><svg class="ic"><use href="#t-raft"/></svg>筏板基础<kbd>(M)</kbd></a></li>
            <li><a href="#"><svg class="ic"><use href="#t-col"/></svg>框柱<kbd>(Z)</kbd></a></li>
            <li><a href="#"><svg class="ic"><use href="#t-wall"/></svg>剪力墙<kbd>(Q)</kbd></a></li>
            <li><a href="#"><svg class="ic"><use href="#t-beam"/></svg>梁<kbd>(L)</kbd></a></li>
            <li><a href="#"><svg class="ic"><use href="#t-slab"/></svg>现浇板<kbd>(B)</kbd></a></li>
          </ul>
        </li>
        <li><a href="#"><svg class="ic"><use href="#t-folder"/></svg>轴线</a></li>
        <li><a href="#"><svg class="ic"><use href="#t-folder"/></svg>柱</a></li>
        <li><a href="#"><svg class="ic"><use href="#t-folder"/></svg>墙</a></li>
        <li><a href="#"><svg class="ic"><use href="#t-folder"/></svg>门窗洞</a></li>
        <li><a href="#"><svg class="ic"><use href="#t-folder"/></svg>梁</a></li>
        <li><a href="#"><svg class="ic"><use href="#t-folder"/></svg>板</a></li>
        <li><a href="#"><svg class="ic"><use href="#t-folder"/></svg>空心楼盖</a></li>
        <li class="open"><a href="#"><svg class="ic"><use href="#t-open"/></svg>基础</a>
          <ul>
            <li><a href="#"><svg class="ic"><use href="#t-fbeam"/></svg>基础梁<kbd>(F)</kbd></a></li>
            <li><a href="#"><svg class="ic"><use href="#t-raft"/></svg>筏板基础<kbd>(M)</kbd></a></li>
            <li><a href="#"><svg class="ic"><use href="#t-pit"/></svg>集水坑<kbd>(K)</kbd></a></li>
            <li><a href="#"><svg class="ic"><use href="#t-pier"/></svg>柱墩<kbd>(Y)</kbd></a></li>
            <li><a href="#"><svg class="ic"><use href="#t-main"/></svg>筏板主筋<kbd>(R)</kbd></a></li>
            <li><a href="#"><svg class="ic"><use href="#t-neg"/></svg>筏板负筋<kbd>(X)</kbd></a></li>
            <li><a href="#"><svg class="ic"><use href="#t-iso"/></svg>独立基础<kbd>(P)</kbd></a></li>
            <li><a href="#"><svg class="ic"><use href="#t-strip"/></svg>条形基础<kbd>(T)</kbd></a></li>
            <li><a href="#" class="current"><svg class="ic"><use href="#t-cap"/></svg>桩承台<kbd>(V)</kbd></a></li>
            <li><a href="#"><svg class="ic"><use href="#t-fbeam"/></svg>承台梁<kbd>(F)</kbd></a></li>
            <li><a href="#"><svg class="ic"><use href="#t-pile"/></svg>桩<kbd>(U)</kbd></a></li>
            <li><a href="#"><svg class="ic"><use href="#t-band"/></svg>基础板带<kbd>(W)</kbd></a></li>
          </ul>
        </li>
        <li><a href="#"><svg class="ic"><use href="#t-folder"/></svg>其它</a></li>
        <li><a href="#"><svg class="ic"><use href="#t-folder"/></svg>自定义</a></li>
        <li><a href="#"><svg class="ic"><use href="#t-folder"/></svg><kbd class="flush">CAD</kbd>识别 <svg class="ic cad"><use href="#t-cad"/></svg><b class="new">NEW</b></a></li>
      </ul>
      <button class="section">单构件输入</button>
      <button class="section">报表预览</button>
    </aside>

    <main class="work">
      <div class="bar">
        <div class="group">
          <span class="grip"></span>
          <div class="combos">
            <span class="combo short"><select aria-label="楼层"><option>基础层</option></select></span>
            <span class="combo"><select aria-label="构件大类"><option>基础</option></select></span>
            <span class="combo"><select aria-label="构件类型"><option>桩承台</option></select></span>
            <span class="combo"><select aria-label="构件名称"><option>CT-1</option></select></span>
            <span class="combo"><select aria-label="显示范围"><option>整体</option></select></span>
          </div>
          <span class="sep"></span>
          <button class="tool"><svg class="ic"><use href="#i-prop"/></svg>属性</button>
          <button class="tool on"><svg class="ic"><use href="#i-edit"/></svg>编辑钢筋</button>
          <button class="tool"><svg class="ic"><use href="#i-list"/></svg>构件列表</button>
          <button class="tool"><svg class="ic"><use href="#i-pick"/></svg>拾取构件</button>
        </div>
        <div class="group">
          <span class="grip"></span>
          <button class="tool"><svg class="ic"><use href="#i-two"/></svg>两点</button>
          <button class="tool"><svg class="ic"><use href="#i-para"/></svg>平行</button>
          <button class="tool drop"><svg class="ic"><use href="#i-angle"/></svg>点角</button>
          <button class="tool drop"><svg class="ic"><use href="#i-three"/></svg>三点辅轴</button>
          <button class="tool"><svg class="ic"><use href="#i-delax"/></svg>删除辅轴</button>
          <button class="tool drop"><svg class="ic"><use href="#i-dim"/></svg>尺寸标注</button>
        </div>
      </div>

      <div class="bar">
        <div class="group">
          <span class="grip"></span>
          <button class="tool drop"><svg class="ic"><use href="#i-cursor"/></svg>选择</button>
          <span class="sep"></span>
          <button class="tool"><svg class="ic"><use href="#i-point"/></svg>点</button>
          <button class="tool"><svg class="ic"><use href="#i-rotpt"/></svg>旋转点</button>
          <span class="sep"></span>
          <button class="tool" disabled><svg class="ic"><use href="#i-line"/></svg>直线</button>
          <button class="tool drop" disabled><svg class="ic"><use href="#i-arc"/></svg>三点画弧</button>
          <span class="combo boxed"><select aria-label="画弧方式" disabled><option></option></select></span>
          <button class="tool" disabled><svg class="ic"><use href="#i-rect"/></svg>矩形</button>
          <span class="sep"></span>
          <button class="tool drop tight"><svg class="ic"><use href="#i-smart"/></svg>智能布置</button>
          <span class="sep"></span>
          <button class="tool" disabled><svg class="ic"><use href="#i-dir"/></svg>调整钢筋方向</button>
          <button class="tool" disabled><svg class="ic"><use href="#i-dir"/></svg>编辑承台加强筋</button>
          <button class="tool drop"><svg class="ic"><use href="#i-check"/></svg>查改标注</button>
          <button class="tool"><svg class="ic"><use href="#i-cap"/></svg>应用到同名承台</button>
          <button class="tool"><svg class="ic"><use href="#i-slope"/></svg>调整承台放坡</button>
        </div>
      </div>

      <div class="bar spare"><div class="group stub"><span class="grip"></span></div></div>

      <section class="viewport">
        <svg class="scene" viewBox="0 0 1196 280" preserveAspectRatio="xMinYMin slice" aria-label="钢筋三维视图">
          <g fill="none" stroke="#008000">
            <path d="M216 0L185 29M0 165h2M184 170L521 180M1133 195L1041 280"/>
            <path d="M556 207L476 280" stroke-dasharray="4 9"/>
          </g>
          <path d="M621 181L1133 195L1196 137" fill="none" stroke="#f00"/>
          <svg x="314" y="-3" width="520" height="290" viewBox="0 0 1560 870">
            <g id="cage-back" class="rebar"></g>
            <path d="M553 9H820L852 617L630 611z" fill="#33006b" fill-opacity=".75"/>
            <path d="M820 9H930L988 493L852 617z" fill="#290056" fill-opacity=".8"/>
            <g id="cage-top" class="rebar"></g>
            <path class="solid" d="M448 9L70 356L133 848M70 356L730 374L790 848M730 374L1130 9M146 848L823 228M955 228L1483 243L1465 95M1483 243L823 848"/>
            <path class="ridge" d="M730 374L1030 98M730 374L756 580"/>
          </svg>
          <path d="M587 0H1196V39L610 23z" fill="#303030" fill-opacity=".85"/>
          <path d="M983 0h44l5 34-45-1z" fill="#5b00ad"/>
          <path d="M1027 0h21l2 17-18 16z" fill="#52307a"/>
          <g fill="none" stroke="#6c6c6c">
            <circle cx="597" cy="140" r="124"/>
            <circle cx="597" cy="15" r="8"/><circle cx="722" cy="140" r="8"/><circle cx="597" cy="264" r="8"/><circle cx="473" cy="140" r="8"/>
          </g>
          <g fill="none" stroke="#008000"><circle cx="490" cy="267" r="13"/><circle cx="1054" cy="267" r="13"/></g>
          <text class="axis-no" x="490" y="273">1</text>
          <text class="axis-no" x="1056" y="273">2</text>
          <path d="M55 230L51 196" stroke="#007cff" stroke-width="4"/><path d="M50 184l5 13h-9z" fill="#007cff"/>
          <path d="M55 230l14-13" stroke="#0f0" stroke-width="4"/><path d="M74 212l-1 8-5-6z" fill="#0f0"/>
          <path d="M55 230h34" stroke="#f00" stroke-width="4"/><path d="M101 231l-13-4v8z" fill="#f00"/>
          <path d="M36 187l9-7M36 187h9" stroke="#0050a0"/>
          <text class="axis" x="78" y="219" fill="#0f0">Y</text>
          <text class="axis" x="95" y="229" fill="#a00">X</text>
          <path d="M222 206L393 125L391 121L410 122L397 136L395 131z" fill="#ff3838"/>
          <text class="note" x="158" y="223">无弯折</text>
        </svg>

        <div class="panel">
          <h3>钢筋显示控制面板</h3>
          <div class="checks">
            <label><input type="checkbox" checked>上部受力筋</label>
            <label><input type="checkbox" checked>下部受力筋</label>
            <label><input type="checkbox" checked>箍筋</label>
            <label><input type="checkbox" checked>侧面受力筋</label>
            <label><input type="checkbox" checked>显示其它图元</label>
            <label><input type="checkbox" checked>显示详细公式</label>
          </div>
        </div>
      </section>

      <div class="bar edit">
        <div class="group">
          <span class="grip"></span>
          <button class="tool" disabled><svg class="ic"><use href="#i-brush"/></svg>删除</button>
          <span class="sep"></span>
          <button class="tool" disabled><svg class="ic"><use href="#i-copy"/></svg>复制</button>
          <button class="tool" disabled><svg class="ic"><use href="#i-mirror"/></svg>镜像</button>
          <span class="sep"></span>
          <button class="tool" disabled><svg class="ic"><use href="#i-move"/></svg>移动</button>
          <button class="tool" disabled><svg class="ic"><use href="#i-rotate"/></svg>旋转</button>
          <span class="sep"></span>
          <button class="tool" disabled><svg class="ic"><use href="#i-extend"/></svg>延伸</button>
          <button class="tool" disabled><svg class="ic"><use href="#i-trim"/></svg>修剪</button>
          <span class="sep"></span>
          <button class="tool" disabled><svg class="ic"><use href="#i-break"/></svg>打断</button>
          <button class="tool" disabled><svg class="ic"><use href="#i-merge"/></svg>合并</button>
          <button class="tool" disabled><svg class="ic"><use href="#i-split"/></svg>分割</button>
          <span class="sep"></span>
          <button class="tool drop tight" disabled><svg class="ic"><use href="#i-align"/></svg>对齐</button>
          <button class="tool" disabled><svg class="ic"><use href="#i-offset"/></svg>偏移</button>
          <button class="tool" disabled><svg class="ic"><use href="#i-stretch"/></svg>拉伸</button>
          <span class="sep"></span>
          <button class="tool" disabled><svg class="ic"><use href="#i-grip"/></svg>设置夹点</button>
        </div>
      </div>

      <div class="bar edit">
        <div class="group">
          <span class="grip"></span>
          <button class="tool"><svg class="ic"><use href="#i-ortho"/></svg>正交</button>
          <button class="tool on"><svg class="ic"><use href="#i-snap"/></svg>对象捕捉</button>
          <button class="tool on"><svg class="ic"><use href="#i-dyn"/></svg>动态输入</button>
        </div>
        <div class="group">
          <span class="grip"></span>
          <button class="tool"><svg class="ic"><use href="#i-cross"/></svg>交点</button>
          <button class="tool on"><svg class="ic"><use href="#i-perp"/></svg>垂点</button>
          <button class="tool on"><svg class="ic"><use href="#i-mid"/></svg>中点</button>
          <button class="tool"><svg class="ic"><use href="#i-vertex"/></svg>顶点</button>
          <button class="tool"><svg class="ic"><use href="#i-coord"/></svg>坐标</button>
        </div>
        <div class="group offset">
          <span class="grip"></span>
          <span class="combo short"><select aria-label="偏移方式"><option>不偏移</option></select></span>
          <span class="sep"></span>
          <label for="off-x">X=</label>
          <span class="spin"><input id="off-x" value="0"></span>
          <span class="unit">mm</span>
          <label for="off-y">Y=</label>
          <span class="spin"><input id="off-y" value="0"></span>
          <span class="unit">mm</span>
          <span class="sep"></span>
          <label class="rot"><input type="checkbox">旋转</label>
          <span class="spin wide"><input aria-label="旋转角度" value="0.000"></span>
          <span class="unit">°</span>
        </div>
      </div>

      <section class="detail">
        <div class="dock"><button aria-label="关闭编辑钢筋"><svg viewBox="0 0 10 10"><path d="M.5 .5h9v9h-9z" fill="#fff" stroke="#555"/><path d="M1 1l8 8M9 1L1 9" stroke="#5a2030" stroke-width="1.500"/></svg></button></div>
        <div class="bar">
          <div class="group fill">
            <button class="tool" aria-label="首条" disabled><svg class="ic"><use href="#i-first"/></svg></button>
            <button class="tool" aria-label="上一条" disabled><svg class="ic"><use href="#i-prev"/></svg></button>
            <button class="tool" aria-label="下一条"><svg class="ic"><use href="#i-next"/></svg></button>
            <button class="tool" aria-label="末条"><svg class="ic"><use href="#i-last"/></svg></button>
            <span class="sep"></span>
            <button class="tool" aria-label="上移" disabled><svg class="ic"><use href="#i-up"/></svg></button>
            <button class="tool" aria-label="下移"><svg class="ic"><use href="#i-down"/></svg></button>
            <span class="sep"></span>
            <button class="tool" disabled><svg class="ic"><use href="#i-insert"/></svg>插入</button>
            <button class="tool" disabled><svg class="ic"><use href="#i-remove"/></svg>删除</button>
            <button class="tool"><svg class="ic"><use href="#i-scale"/></svg>缩尺配筋</button>
            <button class="tool"><svg class="ic"><use href="#i-info"/></svg>钢筋信息</button>
            <button class="tool"><svg class="ic"><use href="#i-lib"/></svg>钢筋图库</button>
            <button class="tool drop tight"><svg class="ic"><use href="#i-other"/></svg>其他</button>
            <button class="tool">关闭</button>
            <span class="sep wide"></span>
            <output>单构件钢筋总重(kg)：173.333</output>
          </div>
        </div>

        <div class="frame">
          <div class="sheet">
            <table>
              <colgroup>
                <col class="c33"><col class="c73"><col class="c56"><col class="c36"><col class="c33"><col class="c201"><col class="c166"><col class="c156"><col class="c61"><col class="c38"><col class="c39"><col class="c49"><col class="c61"><col class="c61"><col class="c71"><col class="c71">
              </colgroup>
              <thead>
                <tr><th></th><th>筋号</th><th class="sel">直径<kbd>(mm)</kbd></th><th>级别</th><th>图号</th><th>图形</th><th>计算公式</th><th>公式描述</th><th>长度<kbd>(mm)</kbd></th><th>根数</th><th>搭接</th><th>损耗<kbd>(%)</kbd></th><th>单重<kbd>(kg)</kbd></th><th>总重<kbd>(kg)</kbd></th><th>钢筋归类</th><th>搭接形式</th></tr>
              </thead>
              <tbody>
                <tr class="r1">
                  <th class="sel">1*</th><td class="cjk">上部受力筋.<br>1</td><td class="cell">14</td>
                  <td class="grade"><svg><use href="#g-three"/></svg></td><td>1</td>
                  <td class="shape"><svg viewBox="0 0 200 28"><path d="M23 19h150" stroke="#000" stroke-width="2"/><text x="101" y="16" text-anchor="middle" class="red">2900</text></svg></td>
                  <td>3000-2*50</td><td class="cjk">净长-两倍保护层</td><td>2900</td><td>8</td><td>0</td><td>0</td><td>3.509</td><td>28.072</td><td class="cjk">直筋</td><td class="cjk">绑扎</td>
                </tr>
                <tr class="r2">
                  <th>2</th><td class="cjk">下部受力筋.<br>1</td><td>20</td>
                  <td class="grade"><svg><use href="#g-three"/></svg></td><td>63</td>
                  <td class="shape"><svg viewBox="0 0 200 33"><path d="M40 8v14h119V8" fill="none" stroke="#000" stroke-width="2"/><text x="15" y="21" class="red">200</text><text x="99" y="18" text-anchor="middle">2900</text></svg></td>
                  <td>10*d+3000-2*50+10*d</td><td class="cjk">设定弯折+净长-两倍保护层+<br>设定弯折</td><td>3300</td><td>8</td><td>0</td><td>0</td><td>8.151</td><td>65.208</td><td class="cjk">直筋</td><td class="cjk">直螺纹连接</td>
                </tr>
                <tr class="r2">
                  <th>3</th><td class="cjk">箍筋<kbd class="flush">.1</kbd></td><td>10</td>
                  <td class="grade"><svg><use href="#g-one"/></svg></td><td>195</td>
                  <td class="shape"><svg viewBox="0 0 200 33"><path d="M82 7h33v21H82zM102 14l9-7M108 19l7-7" fill="none" stroke="#000" stroke-width="2"/><text x="54" y="22">750</text><text x="83" y="25" class="red">1100</text></svg></td>
                  <td>2*((1200-2*50)+(900-50-100<br>))+2*(11.9*d)</td><td></td><td>3938</td><td>16</td><td>0</td><td>0</td><td>2.43</td><td>38.876</td><td class="cjk">箍筋</td><td class="cjk">绑扎</td>
                </tr>
                <tr class="r3">
                  <th>4</th><td class="cjk">箍筋<kbd class="flush">.2</kbd></td><td>10</td>
                  <td class="grade"><svg><use href="#g-one"/></svg></td><td>195</td>
                  <td class="shape"><svg viewBox="0 0 200 36"><path d="M82 10h33v21H82zM102 17l9-7M108 22l7-7" fill="none" stroke="#000" stroke-width="2"/><text x="54" y="25">750</text><text x="83" y="28" class="red">393</text></svg></td>
                  <td>2*(((1200-2*50-2*d-20)/6*2<br>+20+2*d)+(900-50-100))+2*(<br>11.9*d)</td><td></td><td>2525</td><td>16</td><td>0</td><td>0</td><td>1.558</td><td></td><td></td><td></td>
                </tr>
              </tbody>
            </table>
          </div>
          <div class="vscroll"><button class="arr up" aria-label="向上滚动"></button><div class="thumb"></div><button class="arr down" aria-label="向下滚动"></button></div>
          <div class="hscroll"><button class="arr left" aria-label="向左滚动"></button><div class="thumb"></div><span class="rest"></span><button class="arr right" aria-label="向右滚动"></button></div>
        </div>

        <svg class="mark" viewBox="0 0 160 54" aria-hidden="true"><path d="M3 49L17 38L19 42L157 4L21 50L20 54z" fill="#ff3838"/></svg>
        <p class="remark">工程设置里面修改了但是图元中没修改</p>
      </section>
    </main>
  </div>

  <footer class="status">
    <span class="pos">X=-929 Y=855</span>
    <span class="floor"><i>层高</i>:2.1m</span>
    <span class="base"><i>底标高</i>:-2.1m</span>
    <span class="count">1(94)</span>
    <span class="blank"></span>
    <span class="fps">205.8 FPS</span>
  </footer>

  <div class="ime">
    <svg class="sogou" viewBox="0 0 28 28" aria-hidden="true"><path d="M2 5L23 1q2 0 3 2l2 19-3 3-19 3-3-2L1 8z" fill="#f05a22"/><path d="M21 8q-6-3-11-1-5 3-1 6l8 1q5 3 0 6-5 2-10-1" fill="none" stroke="#fff" stroke-width="4"/></svg>
    <button>中</button>
    <button aria-label="标点"><svg viewBox="0 0 16 16"><circle cx="4" cy="6" r="2" fill="none" stroke="#1c72c8" stroke-width="1.500"/><path d="M10 9h4q0 4-3 5v-3h-1z" fill="#1c72c8"/></svg></button>
    <button aria-label="表情"><svg viewBox="0 0 16 16"><circle cx="8" cy="8" r="7" fill="none" stroke="#1c72c8" stroke-width="2"/><path d="M5 5v2M11 5v2M4 9q4 5 8 0" fill="none" stroke="#1c72c8" stroke-width="1.500"/></svg></button>
    <button aria-label="语音"><svg viewBox="0 0 16 16"><rect x="5" y="0" width="6" height="10" rx="3" fill="#1c72c8"/><path d="M3 7q0 5 5 5t5-5M8 12v3M5 15h6" fill="none" stroke="#1c72c8" stroke-width="2"/></svg></button>
    <button aria-label="软键盘"><svg viewBox="0 0 16 16"><path d="M1 3h14v10H1z" fill="none" stroke="#1c72c8" stroke-width="2"/><path d="M3 5.500h10M3 8.500h10" stroke="#1c72c8" stroke-dasharray="2 1"/><path d="M5 10.500h6" stroke="#1c72c8"/></svg></button>
    <button aria-label="账号"><svg viewBox="0 0 16 16"><circle cx="6" cy="4" r="3" fill="#1c72c8"/><path d="M0 13q0-6 6-6 4 0 5 3v3z" fill="#1c72c8"/><path d="M5 9h11v7H5z" fill="#fff"/><path d="M6 10.500h3.500v2h-3v2H10M11.500 10v2.500h3M14.500 10v5" fill="none" stroke="#1c72c8"/></svg></button>
    <button aria-label="皮肤"><svg viewBox="0 0 16 16"><path d="M1 3l4-2q3 2 6 0l4 2 0 4h-3v8H4V7H1z" fill="#1c72c8"/></svg></button>
    <button aria-label="工具箱"><svg viewBox="0 0 16 16"><path d="M2 14l7-7" stroke="#1c72c8" stroke-width="4"/><path d="M14 3l-3 3-2-2 2-3q-5 0-4 5 2 4 7 2 2-2 0-5z" fill="#1c72c8"/></svg></button>
  </div>

  <script src="scene.js"></script>
</body>
</html>
```

FILE: styles.css
```css
* {
  box-sizing: border-box;
}

body {
  margin: 0;
  min-height: 100vh;
  display: flex;
  flex-direction: column;
  background: #f0f0f0;
  color: #000;
  font: 12px/16px "Open Sans", "Noto Sans CJK SC", sans-serif;
  overflow-x: hidden;
}

button, input, select {
  font: inherit;
  color: inherit;
  margin: 0;
}

button {
  border: 0;
  padding: 0;
  background: none;
  white-space: nowrap;
}

a {
  color: inherit;
  text-decoration: none;
}

h1, h2, h3, p {
  margin: 0;
  font-size: 12px;
  font-weight: normal;
}

kbd {
  margin-left: 2px;
  font: 10px/12px "DejaVu Sans Mono", monospace;
}

kbd.flush {
  margin-left: 0;
}

.sprite {
  display: none;
}

.ic {
  width: 16px;
  height: 16px;
  flex: none;
}

/* title bar */
.titlebar {
  display: flex;
  height: 19px;
  padding-bottom: 3px;
  border-bottom: 1px solid #5c6b7c;
  background: linear-gradient(90deg, #cfe2ee 0, #b4d3e6 20%, #84cdb8 26%, #93d4c0 38%, #a9c9ea 42%, #a6c8ec 100%);
}

.logo {
  width: 16px;
  height: 15px;
  margin-left: -4px;
  flex: none;
}

.titlebar h1 {
  flex: 1;
  padding-left: 5px;
  font-family: Inter, "Noto Sans CJK SC", sans-serif;
  white-space: nowrap;
  overflow: hidden;
}

.win-buttons {
  display: flex;
  height: 15px;
  margin-right: 3px;
  border: 1px solid #4f5f72;
  border-top: 0;
  border-radius: 0 0 5px 5px;
  overflow: hidden;
}

.win-buttons button {
  width: 28px;
  border-right: 1px solid #4f5f72;
  background: linear-gradient(#d4dfea, #a8bacd);
}

.win-buttons svg {
  display: block;
  width: 100%;
  height: 14px;
}

.win-buttons .close {
  width: 46px;
  border: 0;
  background: linear-gradient(#d98a78, #bf3a24);
}

/* menu bar */
.menubar {
  display: flex;
  align-items: center;
  height: 31px;
}

.menus {
  display: flex;
  gap: 11px;
  padding: 0 12px 0 3px;
}

.account {
  display: flex;
  flex: 1;
  justify-content: flex-end;
  gap: 2px;
}

.notice {
  width: 187px;
  height: 30px;
  line-height: 30px;
  text-align: center;
  color: #117070;
  background: #f8f8f8;
}

.user {
  width: 220px;
  justify-content: space-between;
}

/* toolbars */
.bar {
  display: flex;
  gap: 2px;
  height: 27px;
  margin-bottom: 2px;
}

.group {
  display: flex;
  align-items: center;
  border-radius: 3px;
  background: linear-gradient(#fbfbfb, #f1f1f1);
}

.user.group {
  height: 30px;
}

.tool {
  display: flex;
  align-items: center;
  gap: 4px;
  height: 23px;
  padding: 0 3px 0 2px;
  border: 1px solid transparent;
}

.tool.on {
  border-color: #3399ff;
  background: #e3eefa;
}

.tool.white {
  background: #fff;
}

.tool:disabled {
  color: #8b8b8b;
}

.drop::after {
  content: "";
  width: 5px;
  height: 3px;
  margin-left: 3px;
  background: currentColor;
  clip-path: polygon(0 0, 100% 0, 50% 100%);
}

.drop.tight::after {
  margin-left: -1px;
}

.sep {
  width: 1px;
  height: 17px;
  margin: 0 3px 0 2px;
  flex: none;
  background: #c4c4c4;
}

.sep.wide {
  margin: 0 6px 0 5px;
}

.grip {
  width: 8px;
  height: 15px;
  flex: none;
  background: repeating-linear-gradient(#b4b4b4 0 2px, transparent 2px 4px) 4px 0 / 2px 15px no-repeat;
}

.more {
  margin-left: auto;
  padding: 0 5px;
  height: 24px;
  font-size: 14px;
  line-height: 12px;
}

.top {
  gap: 3px;
  margin-bottom: 3px;
}

.file {
  width: 147px;
}

.calc {
  width: 600px;
}

.view {
  flex: 1;
}

.combos {
  display: flex;
  gap: 3px;
  margin-right: 3px;
}

.combo {
  position: relative;
  display: flex;
  width: 69px;
  height: 23px;
  background: linear-gradient(90deg, #fff 0, #fff calc(100% - 11px), #f3f3f3 calc(100% - 11px));
}

.combo.short {
  width: 58px;
}

.combo.boxed {
  width: 56px;
  margin: 0 1px;
  border: 1px solid #707070;
  background: #f4f4f4;
}

.combo select {
  width: 100%;
  padding: 0 12px 0 2px;
  border: 0;
  appearance: none;
  background: none;
}

.combo::after {
  content: "";
  position: absolute;
  right: 3px;
  top: 10px;
  width: 5px;
  height: 3px;
  background: #000;
  clip-path: polygon(0 0, 100% 0, 50% 100%);
  pointer-events: none;
}

.combo.boxed::after {
  background: #777;
}

.spare {
  height: 23px;
}

.stub {
  width: 31px;
  margin-left: 413px;
}

.edit {
  margin-bottom: 1px;
}

.offset {
  padding-right: 4px;
  color: #808080;
}

.offset .combo, .rot {
  color: #000;
}

.offset label {
  padding: 0 4px 0 1px;
}

.unit {
  padding: 0 4px 0 2px;
}

.spin {
  position: relative;
  width: 59px;
  height: 23px;
}

.spin.wide {
  width: 69px;
}

.spin input {
  width: 100%;
  height: 23px;
  padding: 0 18px 0 4px;
  border: 1px solid #707070;
  background: #f4f4f4;
  text-align: right;
}

.spin::before, .spin::after {
  content: "";
  position: absolute;
  right: 5px;
  width: 5px;
  height: 3px;
  background: #666;
  pointer-events: none;
}

.spin::before {
  top: 5px;
  clip-path: polygon(50% 0, 100% 100%, 0 100%);
}

.spin::after {
  bottom: 5px;
  clip-path: polygon(0 0, 100% 0, 50% 100%);
}

.offset .rot {
  display: flex;
  align-items: center;
  gap: 8px;
  padding: 0 4px 0 0;
}

.rot input {
  appearance: none;
  width: 12px;
  height: 12px;
  border: 1px solid #999;
  background: #f6f6f6;
}

/* body */
.app {
  flex: 1;
  display: grid;
  grid-template-columns: 161px minmax(0, 1fr);
  gap: 5px;
  padding-bottom: 2px;
}

.sidebar {
  display: flex;
  flex-direction: column;
  border-right: 1px solid #a0a0a0;
}

.side-title {
  display: flex;
  align-items: center;
  gap: 6px;
  height: 15px;
  margin-bottom: 1px;
  padding-right: 2px;
  background: #0a50dc;
  color: #fff;
}

.side-title h2 {
  flex: 1;
  margin-left: -2px;
  line-height: 15px;
}

.side-title svg {
  display: block;
  width: 12px;
  height: 12px;
}

.section {
  height: 22px;
  border: 1px solid #a0a0a0;
  border-width: 1px 0 0;
  background: #f0f0f0;
  box-shadow: inset 0 1px #fff;
}

.expand {
  display: flex;
  gap: 5px;
  height: 28px;
  padding: 6px 2px;
  border-top: 2px solid #a0a0a0;
  background: linear-gradient(#fdfdfd, #f0f0f0);
}

.expand svg {
  display: block;
  width: 18px;
  height: 16px;
}

.tree {
  flex: 1;
  margin: 0 0 1px;
  padding: 1px 0;
  list-style: none;
  border: 1px solid #828790;
  border-width: 1px 1px 1px 0;
  background: #fff;
}

.tree li {
  position: relative;
}

.tree a {
  display: flex;
  align-items: center;
  height: 16px;
  padding-left: 22px;
}

.tree .ic {
  margin-right: 4px;
}

.tree .cad {
  margin: 0 2px 0 5px;
}

.tree > li::before {
  content: "";
  position: absolute;
  left: 10px;
  top: 4px;
  width: 5px;
  height: 8px;
  background: linear-gradient(#bbb, #999);
  clip-path: polygon(0 0, 100% 50%, 0 100%, 0 80%, 70% 50%, 20% 20%, 20% 90%, 0 100%);
}

.tree > .open::before {
  width: 6px;
  height: 6px;
  top: 5px;
  background: #333;
  clip-path: polygon(100% 0, 100% 100%, 0 100%);
}

.tree ul {
  margin: 0 0 0 11px;
  padding: 0 0 0 19px;
  list-style: none;
  border-left: 1px dotted #999;
}

.tree ul a {
  width: fit-content;
  padding: 0 4px 0 10px;
}

.tree ul li::before {
  content: "";
  position: absolute;
  left: 0;
  top: 0;
  width: 10px;
  height: 9px;
  border: 1px dotted #999;
  border-width: 0 0 1px 1px;
}

.tree ul li:not(:last-child)::after {
  content: "";
  position: absolute;
  left: 0;
  top: 0;
  height: 16px;
  border-left: 1px dotted #999;
}

.tree .current {
  border-radius: 3px;
  background: linear-gradient(90deg, transparent 8px, #f0f0f0 8px);
  box-shadow: inset -1px -1px #d0d0d0;
}

.new {
  padding: 0 1px;
  background: #ffdc00;
  font-size: 9px;
  line-height: 8px;
}

/* work area */
.work {
  display: flex;
  flex-direction: column;
  min-width: 0;
}

.viewport {
  position: relative;
  flex: 1;
  min-height: 280px;
  margin-bottom: 1px;
  background: #000;
}

.scene {
  position: absolute;
  inset: 0;
  width: 100%;
  height: 100%;
}

.rebar {
  fill: none;
  stroke: #a0928c;
  stroke-width: 4;
  shape-rendering: crispEdges;
}

.solid {
  fill: none;
  stroke: #868686;
  stroke-width: 5;
}

.ridge {
  fill: none;
  stroke: #c9bfd0;
  stroke-width: 5;
}

.axis-no {
  fill: #eee;
  font-size: 17px;
  text-anchor: middle;
}

.axis {
  font: 13px "Open Sans", sans-serif;
  font-weight: 300;
}

.note {
  fill: #ff3838;
  font-size: 19px;
  font-weight: 300;
}

.panel {
  position: absolute;
  left: 3px;
  top: 3px;
  width: 180px;
  height: 181px;
  padding: 0 6px 6px;
  display: flex;
  flex-direction: column;
  border: 1px solid #a4a4a4;
  border-radius: 6px;
  background: linear-gradient(#3c3d3f, #4a4b4d 34%, #1c1d1f 36%, #101214);
}

.panel h3 {
  width: fit-content;
  height: 24px;
  line-height: 24px;
  color: #000;
  background: radial-gradient(ellipse, #8a8a8a 40%, transparent 75%);
}

.checks {
  flex: 1;
  display: flex;
  flex-direction: column;
  align-items: flex-start;
  padding: 3px;
  border: 2px solid #8c909a;
  outline: 1px solid #ccc;
  background: #fff;
}

.checks label {
  display: flex;
  align-items: center;
  gap: 4px;
  height: 12px;
  line-height: 12px;
  white-space: nowrap;
}

.checks input {
  appearance: none;
  display: grid;
  place-items: center;
  width: 11px;
  height: 11px;
  border: 1px solid #8e8f8f;
  background: #e8ecf2;
}

.checks input:checked::after {
  content: "";
  width: 3px;
  height: 6px;
  border: solid #3a5488;
  border-width: 0 2px 2px 0;
  transform: rotate(40deg);
}

/* bar detail grid */
.detail {
  position: relative;
  display: grid;
  grid-template-columns: 13px minmax(0, 1fr);
  padding-top: 2px;
}

.detail .bar {
  margin: 0;
}

.dock {
  grid-row: 1 / 3;
  padding: 2px 1px;
  background: radial-gradient(circle, #bdbdbd 1px, transparent 1px) 1px 14px / 5px 5px;
}

.dock button, .dock svg {
  display: block;
  width: 10px;
  height: 10px;
}

.dock button {
  background: #f0f0f0;
}

.fill {
  flex: 1;
  padding-left: 3px;
}

.frame {
  display: grid;
  grid-template: 154px 16px / minmax(0, 1fr) 19px;
  margin-right: 1px;
  border: 1px solid #a0a0a0;
  background: #f0f0f0;
}

.sheet {
  overflow: hidden;
  background: #fff;
}

table {
  width: 1204px;
  table-layout: fixed;
  border-collapse: separate;
  border-spacing: 0;
  font: 10px/12px "DejaVu Sans Mono", monospace;
}

.c33 { width: 33px; }
.c36 { width: 36px; }
.c38 { width: 38px; }
.c39 { width: 39px; }
.c49 { width: 49px; }
.c56 { width: 56px; }
.c61 { width: 61px; }
.c71 { width: 71px; }
.c73 { width: 73px; }
.c156 { width: 156px; }
.c166 { width: 166px; }
.c201 { width: 201px; }

th, td {
  padding: 0 1px;
  border: solid #c0c0c0;
  border-width: 0 1px 1px 0;
  text-align: left;
  white-space: nowrap;
  overflow: hidden;
}

th {
  background: linear-gradient(90deg, #fff, #f4f4f4);
  font-weight: normal;
  text-align: center;
}

th kbd {
  margin-left: 0;
}

thead th {
  height: 20px;
  background: linear-gradient(#fff, #f2f2f2);
  font: 12px/12px "Noto Sans CJK SC", sans-serif;
}

thead .sel {
  background: linear-gradient(#fad79c, #f2bf62);
  color: #5c0050;
}

tbody .sel {
  background: #ffd28c;
  color: #5c0050;
}

td {
  background: #ccffd9;
}

td:nth-child(2) {
  border-right-color: #000;
}

.cell {
  background: #b3efdf;
}

.cjk {
  font: 12px/12px "Noto Sans CJK SC", sans-serif;
}

.r1 td { height: 29px; }
.r2 td { height: 34px; }
.r3 td { height: 38px; }

.grade {
  text-align: center;
}

.grade svg {
  width: 12px;
  height: 12px;
  vertical-align: middle;
}

.shape {
  padding: 0;
}

.shape svg {
  display: block;
  width: 200px;
}

.shape .red {
  fill: #f00;
}

.vscroll {
  display: flex;
  flex-direction: column;
  width: 15px;
  margin-left: 1px;
}

.hscroll {
  display: flex;
}

.arr {
  flex: none;
  width: 15px;
  height: 20px;
}

.hscroll .arr {
  width: 18px;
  height: 15px;
}

.arr::before {
  content: "";
  display: block;
  width: 7px;
  height: 4px;
  margin: auto;
  background: #333;
}

.up::before { clip-path: polygon(50% 0, 100% 100%, 0 100%); }
.down::before { clip-path: polygon(0 0, 100% 0, 50% 100%); }

.left::before, .right::before {
  width: 4px;
  height: 7px;
}

.left::before { clip-path: polygon(100% 0, 100% 100%, 0 50%); }
.right::before { clip-path: polygon(0 0, 100% 50%, 0 100%); }

.down {
  margin-top: auto;
}

.thumb {
  border: 1px solid #979797;
  border-radius: 2px;
}

.vscroll .thumb {
  height: 30px;
  background: repeating-linear-gradient(#777 0 1px, transparent 1px 3px) center / 7px 9px no-repeat, linear-gradient(90deg, #f6f6f6, #c8c8c8);
}

.hscroll .thumb {
  flex: 809;
  height: 15px;
  background: repeating-linear-gradient(90deg, #777 0 1px, transparent 1px 3px) center / 9px 7px no-repeat, linear-gradient(#f6f6f6, #e0e0e0 50%, #c4c4c4);
}

.rest {
  flex: 318;
}

.hscroll .right {
  margin-left: auto;
}

.mark {
  position: absolute;
  left: 400px;
  top: 14px;
  width: 160px;
  height: 54px;
  pointer-events: none;
}

.remark {
  position: absolute;
  left: 597px;
  top: 0;
  color: #ff3838;
  font-size: 19px;
  font-weight: 300;
  line-height: 20px;
  white-space: nowrap;
}

/* status bar */
.status {
  display: flex;
  gap: 2px;
  height: 23px;
  padding-top: 2px;
  border-bottom: 1px solid #2a3440;
  font: 10px/19px "DejaVu Sans Mono", monospace;
}

.status span {
  padding-left: 2px;
  border: 1px solid #d4d4d4;
  background: #f6f6f6;
  white-space: nowrap;
}

.status i {
  font: 12px/16px "Noto Sans CJK SC", sans-serif;
}

.status .pos {
  width: 144px;
  padding: 0;
}

.floor { width: 78px; }
.base { width: 98px; }
.count { width: 48px; }
.blank { flex: 1; }
.fps { width: 70px; }

/* input method bar */
.ime {
  position: fixed;
  right: 2px;
  bottom: 48px;
  display: flex;
  align-items: center;
  gap: 6px;
  height: 29px;
}

.ime::before {
  content: "";
  position: absolute;
  inset: 3px -2px 3px 20px;
  border: 1px solid #b8c8dc;
  border-right: 0;
  background: #fafcff;
}

.ime > * {
  position: relative;
}

.ime button {
  width: 16px;
  height: 16px;
  color: #1c72c8;
  font-size: 16px;
  font-weight: bold;
}

.ime button svg {
  display: block;
  width: 16px;
  height: 16px;
}

.sogou {
  width: 28px;
  height: 28px;
}
```

FILE: scene.js
```js
// Pile cap cage: every bar is a straight segment stepped along the depth axis.
const DX = 44;
const DY = -41;
const STIRRUPS = 16;

function segment(x1, y1, x2, y2) {
  // clip against the top of the view
  if (y1 < 9 && y2 < 9) return '';
  if (y2 < 9) {
    x2 = x1 + (x2 - x1) * (y1 - 9) / (y1 - y2);
    y2 = 9;
  } else if (y1 < 9) {
    x1 = x2 + (x1 - x2) * (y2 - 9) / (y2 - y1);
    y1 = 9;
  }
  return `M${Math.round(x1)} ${Math.round(y1)}L${Math.round(x2)} ${Math.round(y2)}`;
}

function draw(id, d) {
  const path = document.createElementNS('http://www.w3.org/2000/svg', 'path');
  path.setAttribute('d', d);
  document.getElementById(id).appendChild(path);
}

let back = '';
let top1 = '';

for (let i = 0; i < STIRRUPS; i++) {
  const x = i * DX;
  const y = i * DY;
  // bottom, left and right legs
  back += segment(175 + x, 822 + y, 770 + x, 836 + y);
  back += segment(175 + x, 822 + y, 112 + x, 376 + y);
  back += segment(770 + x, 836 + y, 720 + x, 390 + y);
  // inner stirrup legs
  if (i % 2 === 0) {
    back += segment(345 + x, 824 + y, 287 + x, 406 + y);
    back += segment(600 + x, 830 + y, 545 + x, 380 + y);
    back += segment(287 + x, 406 + y, 545 + x, 412 + y);
  }
  // top
  top1 += segment(112 + x, 376 + y, 720 + x, 388 + y);
  if (i % 2 === 0) {
    // hooks
    top1 += segment(152 + x, 412 + y, 106 + x, 374 + y);
    top1 += segment(140 + x, 412 + y, 106 + x, 374 + y);
    top1 += segment(325 + x, 440 + y, 284 + x, 402 + y);
    top1 += segment(515 + x, 408 + y, 550 + x, 370 + y);
  }
}

const run = (STIRRUPS - 1);
for (let k = 0; k < 8; k++) {
  const bx = 175 + k * 85;
  const by = 822 + k * 2;
  back += segment(bx, by, bx + run * DX, by + run * DY);
  back += segment(bx, by, bx - 12, by - 112);
  // far end hooks
  back += segment(bx + run * DX, by + run * DY, bx + run * DX - 12, by + run * DY - 115);
  const tx = 112 + k * 87;
  const ty = 376 + k * 2;
  top1 += segment(tx, ty, tx + run * DX, ty + run * DY);
}

// side face bars
for (let s = 1; s < 4; s++) {
  const lx = 112 + s * 16;
  const ly = 376 + s * 112;
  back += segment(lx, ly, lx + run * DX, ly + run * DY);
  back += segment(720 + s * 12, ly + 10, 720 + s * 12 + run * DX, ly + 10 + run * DY);
  back += `M${lx} ${ly}q20 8 36 -8M${575 + lx} ${ly + 14}q20 8 36 -8`;
}

draw('cage-back', back);
draw('cage-top', top1);
```
